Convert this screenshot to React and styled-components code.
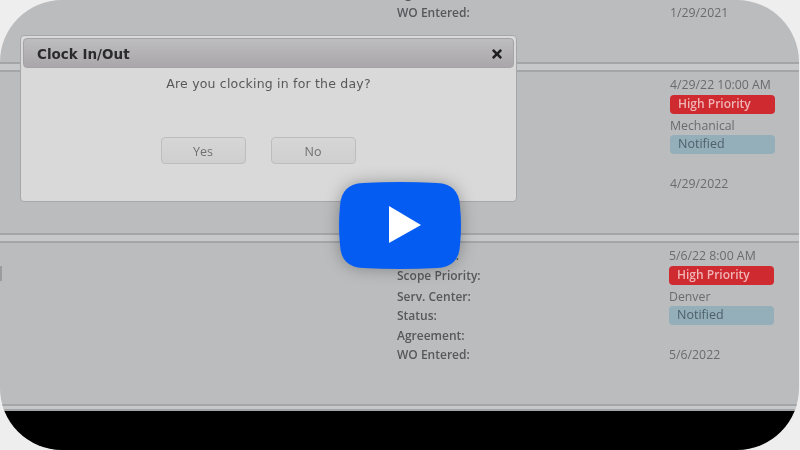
import React from "react";
import styled, { createGlobalStyle } from "styled-components";
import { FaTimes } from "react-icons/fa";

const GlobalStyle = createGlobalStyle`
  html, body {
    margin: 0;
    padding: 0;
    background: #eeeeee;
    overflow: hidden;
  }
`;

const Frame = styled.div`
  position: relative;
  width: 799px;
  height: 450px;
  border-radius: 62px;
  overflow: hidden;
  background: #bbbcbe;
  display: flex;
  flex-direction: column;
  font-family: "Open Sans", "Liberation Sans", sans-serif;
`;

const Section = styled.section`
  height: ${({ $height }) => $height}px;
  flex: none;
  display: flex;
  align-items: ${({ $bottom }) => ($bottom ? "flex-end" : "flex-start")};
  box-sizing: border-box;
  padding-top: ${({ $top }) => $top || 0}px;
  padding-bottom: ${({ $bottomPad }) => $bottomPad || 0}px;
`;

const Band = styled.div`
  height: ${({ $height }) => $height}px;
  flex: none;
  box-sizing: border-box;
  background: #c7c8c9;
  border-top: 2px solid #a4a5a7;
  border-bottom: 2px solid #a4a5a7;
`;

const Marker = styled.div`
  width: 2px;
  height: 15px;
  flex: none;
  margin-top: 20px;
  background: #9b9c9e;
`;

const Rows = styled.div`
  margin-left: ${({ $left }) => $left}px;
  display: flex;
  flex-direction: column;
  flex: none;
  filter: blur(0.3px);
`;

const Row = styled.div`
  display: grid;
  grid-template-columns: ${({ $label }) => $label}px 105px;
  height: 19px;
  align-items: center;
  font-size: 12px;
  white-space: nowrap;
  &:nth-child(even) {
    margin-bottom: 2px;
  }
`;

const DetailRow = styled(Row)`
  &:nth-child(2) {
    margin-top: 1px;
  }
  &:nth-child(4) {
    margin-bottom: 1px;
  }
`;

const Label = styled.span`
  font-weight: 600;
  color: #57585c;
`;

const Value = styled.span`
  color: #6a6b6f;
  font-size: 12.3px;
`;

const Badge = styled.span`
  box-sizing: border-box;
  height: 19px;
  line-height: 18px;
  border-radius: 4px;
  padding-left: 8px;
  font-size: ${({ $tone }) => ($tone === "red" ? 12 : 12.5)}px;
  font-weight: ${({ $tone }) => ($tone === "red" ? 600 : 400)};
  background: ${({ $tone }) => ($tone === "red" ? "#cf2a2f" : "#94aeba")};
  color: ${({ $tone }) => ($tone === "red" ? "#efb4b6" : "#4f6069")};
`;

const Footer = styled.div`
  flex: 1;
  background: #000000;
`;

const Dialog = styled.div`
  position: absolute;
  left: 20px;
  top: 35px;
  width: 497px;
  height: 167px;
  box-sizing: border-box;
  padding: 2px;
  background: #d9d9d9;
  border: 1px solid #a6a7a9;
  border-radius: 4px;
  display: flex;
  flex-direction: column;
  align-items: center;
  font-family: "DejaVu Sans", Verdana, sans-serif;
`;

const TitleBar = styled.div`
  align-self: stretch;
  height: 30px;
  flex: none;
  box-sizing: border-box;
  padding: 1px 9px 0 13px;
  display: flex;
  align-items: center;
  justify-content: space-between;
  background: linear-gradient(#bdbcbe, #a9a7a9);
  border: 1px solid #a3a2a4;
  border-radius: 4px;
  color: #2b2b2d;
  font-size: 13.5px;
  font-weight: 700;
  filter: blur(0.3px);
`;

const Question = styled.div`
  margin-top: 7px;
  font-size: 12.5px;
  letter-spacing: 0.2px;
  line-height: 18px;
  color: #58585a;
  filter: blur(0.3px);
`;

const Buttons = styled.div`
  margin-top: 44px;
  margin-right: 21px;
  display: flex;
  gap: 25px;
`;

const DialogButton = styled.div`
  width: 85px;
  height: 27px;
  box-sizing: border-box;
  padding-top: 1px;
  display: flex;
  align-items: center;
  justify-content: center;
  border: 1px solid #bdbdbe;
  border-radius: 4px;
  background: linear-gradient(#d6d6d6, #cfcfcf);
  font-family: "Open Sans", sans-serif;
  font-size: 12.5px;
  color: #707072;
  filter: blur(0.3px);
`;

const PlayButton = styled.svg`
  position: absolute;
  left: 339px;
  top: 182px;
  width: 122px;
  height: 87px;
  overflow: visible;
  filter: drop-shadow(0 0 8px rgba(0, 0, 0, 0.3));
`;

const Entry = ({ rows, label = 273 }) =>
  rows.map(([name, value, tone]) => (
    <DetailRow key={name} $label={label}>
      <Label>{name}</Label>
      {tone ? <Badge $tone={tone}>{value}</Badge> : <Value>{value}</Value>}
    </DetailRow>
  ));

const App = () => {
  return (
    <>
      <GlobalStyle />
      <Frame>
        <Section $height={62} $bottom $bottomPad={38}>
          <Rows $left={397}>
            <Row $label={273}>
              <Label>Agreement:</Label>
              <Value />
            </Row>
            <Row $label={273}>
              <Label>WO Entered:</Label>
              <Value>1/29/2021</Value>
            </Row>
          </Rows>
        </Section>
        <Band $height={10} />
        <Section $height={161} $top={3}>
          <Rows $left={397}>
            <Entry
              rows={[
                ["Start Date:", "4/29/22 10:00 AM"],
                ["Scope Priority:", "High Priority", "red"],
                ["Serv. Center:", "Mechanical"],
                ["Status:", "Notified", "blue"],
                ["Agreement:", ""],
                ["WO Entered:", "4/29/2022"],
              ]}
            />
          </Rows>
        </Section>
        <Band $height={10} />
        <Section $height={161} $top={3}>
          <Marker />
          <Rows $left={395}>
            <Entry
              label={272}
              rows={[
                ["Start Date:", "5/6/22 8:00 AM"],
                ["Scope Priority:", "High Priority", "red"],
                ["Serv. Center:", "Denver"],
                ["Status:", "Notified", "blue"],
                ["Agreement:", ""],
                ["WO Entered:", "5/6/2022"],
              ]}
            />
          </Rows>
        </Section>
        <Band $height={7} />
        <Footer />

        <Dialog>
          <TitleBar>
            <span>Clock In/Out</span>
            <FaTimes size={14} color="#1f1f21" />
          </TitleBar>
          <Question>Are you clocking in for the day?</Question>
          <Buttons>
            <DialogButton>Yes</DialogButton>
            <DialogButton>No</DialogButton>
          </Buttons>
        </Dialog>

        <PlayButton viewBox="0 0 122 87">
          <path
            d="M24 1Q61 -1 98 1Q120 2 121 24Q123 43.500 121 63Q120 85 98 86Q61 88 24 86Q2 85 1 63Q-1 43.500 1 24Q2 2 24 1Z"
            fill="#055cf2"
          />
          <path d="M50 24L82 43L50 61Z" fill="#ffffff" />
        </PlayButton>
      </Frame>
    </>
  );
};

export default App;
